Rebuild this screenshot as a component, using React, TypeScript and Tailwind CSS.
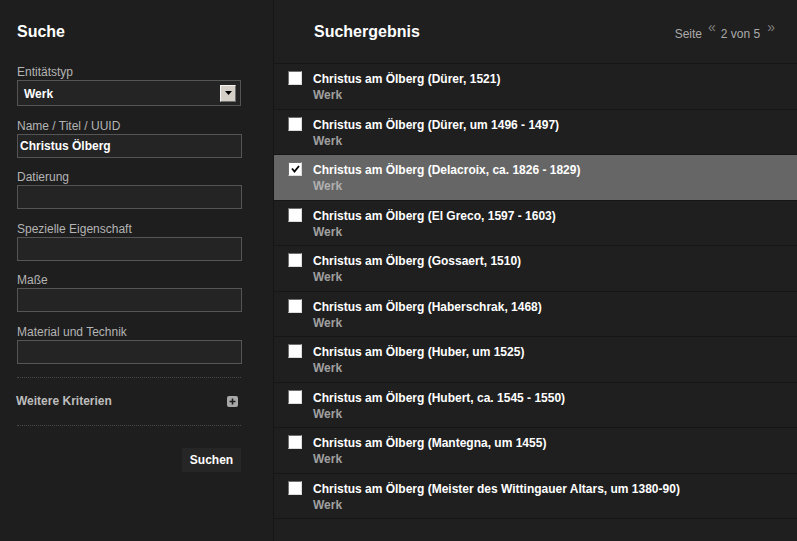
import React from "react";

const rows = [
  "Christus am Ölberg (Dürer, 1521)",
  "Christus am Ölberg (Dürer, um 1496 - 1497)",
  "Christus am Ölberg (Delacroix, ca. 1826 - 1829)",
  "Christus am Ölberg (El Greco, 1597 - 1603)",
  "Christus am Ölberg (Gossaert, 1510)",
  "Christus am Ölberg (Haberschrak, 1468)",
  "Christus am Ölberg (Huber, um 1525)",
  "Christus am Ölberg (Hubert, ca. 1545 - 1550)",
  "Christus am Ölberg (Mantegna, um 1455)",
  "Christus am Ölberg (Meister des Wittingauer Altars, um 1380-90)",
];

function Field({ label, value }: { label: string; value?: string }) {
  return (
    <div className="mt-[11.5px]">
      <div className="text-[12px] leading-[14px] text-[#b4b4b4] pt-[1px]">{label}</div>
      <div className="mt-[1px] h-[24px] w-[225px] border border-[#555] bg-[#242424] px-[2px] flex items-center text-[12px] font-bold text-white">
        {value}
      </div>
    </div>
  );
}

function Checkbox({ checked }: { checked?: boolean }) {
  return (
    <div className="mt-[7px] h-[14px] w-[14px] shrink-0 border border-t-[#6f6f6f] border-l-[#6f6f6f] border-b-[#dcdcdc] border-r-[#dcdcdc] bg-white flex items-center justify-center">
      {checked && (
        <svg width="9" height="8" viewBox="0 0 9 8">
          <path d="M1 3.5 L3.5 6.5 L8 1" stroke="#000" strokeWidth="1.8" fill="none" />
        </svg>
      )}
    </div>
  );
}

export default function App() {
  return (
    <div
      className="flex h-[541px] w-[797px] overflow-hidden bg-[#1e1e1e]"
      style={{ fontFamily: '"Liberation Sans", Arial, sans-serif' }}
    >
      {/* Left panel */}
      <div className="w-[274px] shrink-0 border-r border-[#151515] bg-[#1e1e1e] pl-[17px]">
        <div className="h-[63px] flex items-center text-[16px] font-bold text-white">Suche</div>
        <div className="mt-[1px]">
          <div className="text-[12px] leading-[14px] text-[#b4b4b4] pt-[1px]">Entitätstyp</div>
          <div className="mt-[1px] h-[26px] w-[224px] border border-[#555] bg-[#242424] pl-[6px] pr-[4px] flex items-center justify-between text-[12px] font-bold text-white">
            <span className="pt-[1px]">Werk</span>
            <div className="h-[17px] w-[16px] bg-[#d4d0c8] border border-t-[#f4f4f4] border-l-[#f4f4f4] border-b-[#707070] border-r-[#707070] flex items-center justify-center">
              <svg width="7" height="4" viewBox="0 0 7 4">
                <path d="M0 0 H7 L3.5 4 Z" fill="#000" />
              </svg>
            </div>
          </div>
        </div>
        <Field label="Name / Titel / UUID" value="Christus Ölberg" />
        <Field label="Datierung" />
        <Field label="Spezielle Eigenschaft" />
        <Field label="Maße" />
        <Field label="Material und Technik" />
        <div className="mt-[13px] w-[224px] border-t border-dotted border-[#4a4a4a]" />
        <div className="h-[47px] w-[222px] -ml-[1px] flex items-center justify-between">
          <span className="text-[12px] font-bold text-[#bdbdbd]">Weitere Kriterien</span>
          <div className="h-[11px] w-[11px] rounded-[2px] bg-[#a8a8a8] flex items-center justify-center">
            <svg width="7" height="7" viewBox="0 0 7 7">
              <path d="M3.5 0.5 V6.5 M0.5 3.5 H6.5" stroke="#1e1e1e" strokeWidth="1.6" />
            </svg>
          </div>
        </div>
        <div className="w-[224px] border-t border-dotted border-[#4a4a4a]" />
        <div className="w-[224px] flex justify-end mt-[22px]">
          <div className="h-[24px] w-[59px] bg-[#262626] flex items-center justify-center text-[12px] font-bold text-white">
            Suchen
          </div>
        </div>
      </div>

      {/* Right panel */}
      <div className="flex-1 bg-[#1f1f1f]">
        <div className="h-[64px] border-b border-[#161616] flex items-center justify-between pl-[40px] pr-[22px]">
          <span className="text-[16px] font-bold text-white">Suchergebnis</span>
          <div className="flex items-start text-[12px] text-[#aaa] mt-[4px]">
            <span className="leading-[14px]">Seite</span>
            <span className="ml-[6px] -mt-[7px] text-[14px] leading-[14px] text-[#808080]">«</span>
            <span className="ml-[5px] leading-[14px]">2 von 5</span>
            <span className="ml-[7px] -mt-[7px] text-[14px] leading-[14px] text-[#808080]">»</span>
          </div>
        </div>
        {rows.map((r, i) => {
          const sel = i === 2;
          return (
            <div
              key={i}
              className={`h-[45.5px] border-b border-[#161616] flex pl-[14px] ${sel ? "bg-[#666666]" : ""}`}
            >
              <Checkbox checked={sel} />
              <div className="ml-[11px] pt-[8px]">
                <div className="text-[12px] leading-[14px] font-bold text-white">{r}</div>
                <div className={`mt-[2px] text-[12px] leading-[14px] font-bold ${sel ? "text-[#b0b0b0]" : "text-[#a0a0a0]"}`}>
                  Werk
                </div>
              </div>
            </div>
          );
        })}
      </div>
    </div>
  );
}
